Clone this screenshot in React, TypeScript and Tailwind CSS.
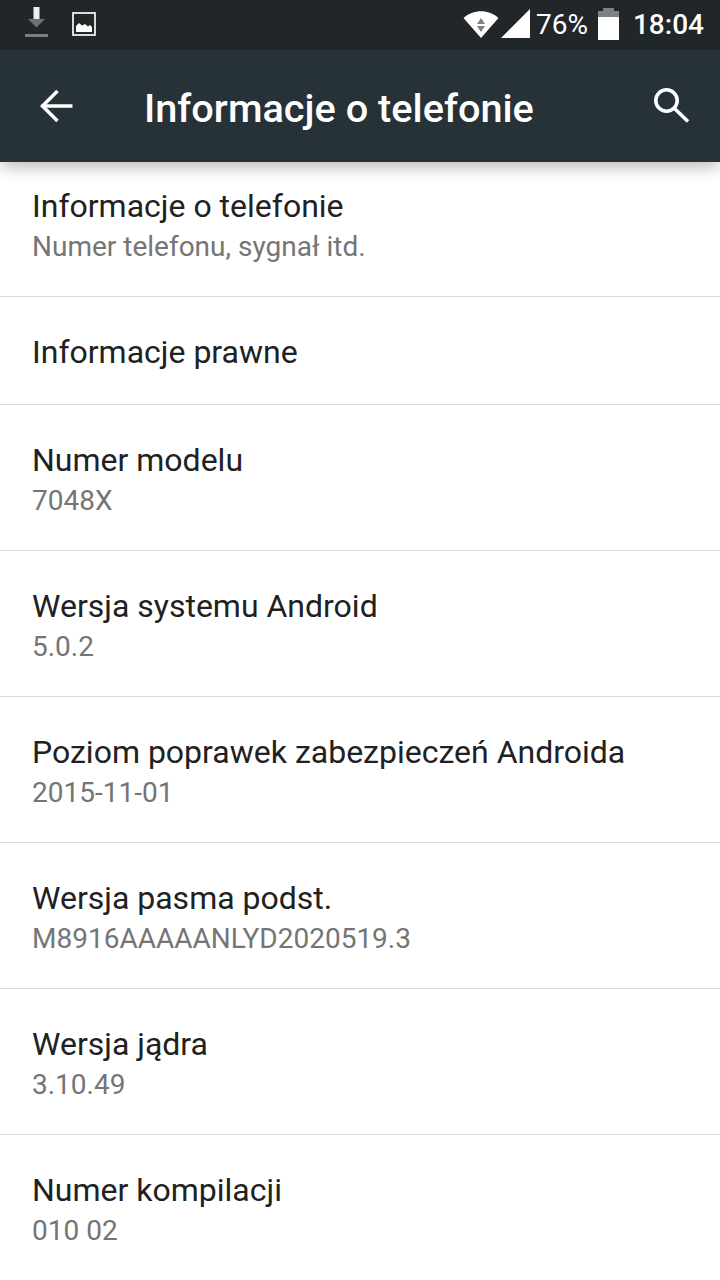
const rows = [
  { title: 'Informacje o telefonie', sub: 'Numer telefonu, sygnał itd.' },
  { title: 'Informacje prawne' },
  { title: 'Numer modelu', sub: '7048X' },
  { title: 'Wersja systemu Android', sub: '5.0.2' },
  { title: 'Poziom poprawek zabezpieczeń Androida', sub: '2015-11-01' },
  { title: 'Wersja pasma podst.', sub: 'M8916AAAAANLYD2020519.3' },
  { title: 'Wersja jądra', sub: '3.10.49' },
  { title: 'Numer kompilacji', sub: '010 02' },
]

function StatusBar() {
  return (
    <div className="flex h-[50px] shrink-0 items-center bg-[#212629] pl-[24px] pr-[16px] text-white">
      <svg width="26" height="34" viewBox="0 0 26 34" className="mb-[2px]">
        <rect x="9.5" y="0" width="6" height="13" fill="#eeeeee" />
        <path d="M4 12h17l-8.500 8.500z" fill="#6d7072" />
        <rect x="1" y="27" width="23" height="3" fill="#7b7f81" />
      </svg>
      <svg width="24" height="24" viewBox="0 0 24 24" className="ml-[22px] mb-[2px]">
        <rect x="1" y="1" width="22" height="22" fill="none" stroke="#eeeeee" strokeWidth="1.800" />
        <path d="M4 20v-6l3-3 3 2.500 3-1.500 3 2.500 2-1.500 2 2V20z" fill="#ffffff" />
      </svg>
      <div className="flex-1" />
      <svg width="36" height="30" viewBox="0 0 36 30" className="mb-[2px]">
        <path d="M0.500 9C10 0 26 0 35.500 9L18 29z" fill="#ffffff" />
        <path d="M18 9l4 6h-8z" fill="#7e8082" />
        <path d="M14 17h8l-4 6z" fill="#7e8082" />
      </svg>
      <svg width="30" height="30" viewBox="0 0 30 30" className="ml-[2px] mb-[2px]">
        <path d="M29 0v29H0z" fill="#ffffff" />
      </svg>
      <span className="ml-[5px] text-[28px] leading-none">76%</span>
      <div className="ml-[10px] mb-[2px] flex h-[32px] w-[21px] flex-col items-center">
        <div className="h-[3px] w-[11px] bg-[#7e8082]" />
        <div className="h-[6px] w-[21px] bg-[#7e8082]" />
        <div className="w-[21px] flex-1 bg-white" />
      </div>
      <span className="ml-[14px] text-[28px] font-medium leading-none">18:04</span>
    </div>
  )
}

function AppBar() {
  return (
    <div className="relative z-10 flex h-[112px] shrink-0 items-center bg-[#263238] text-white shadow-[0_8px_14px_-2px_rgba(0,0,0,0.25)]">
      <svg width="40" height="40" viewBox="0 0 40 40" className="ml-[36px]" fill="none" stroke="#ffffff" strokeWidth="3.500">
        <path d="M5.500 20H36.500" />
        <path d="M21.500 5L6.500 20L21.500 35" />
      </svg>
      <span className="ml-[68px] flex-1 pt-[6px] text-[39.700px] font-medium leading-none">
        Informacje o telefonie
      </span>
      <svg width="40" height="40" viewBox="0 0 40 40" className="mb-[2px] mr-[30px]" fill="none" stroke="#ffffff" strokeWidth="3.600">
        <circle cx="16.500" cy="15.500" r="10.700" />
        <path d="M24 23L38 36.500" />
      </svg>
    </div>
  )
}

export default function App() {
  return (
    <div className="flex h-[1280px] w-[720px] flex-col overflow-hidden bg-white font-['Roboto',sans-serif]">
      <StatusBar />
      <AppBar />
      <div className="-mt-[11px]">
        {rows.map((row) => (
          <div
            key={row.title}
            className={`flex flex-col justify-center border-b border-[#dcdcdc] pl-[32px] ${row.sub ? 'h-[146px] pt-[5px]' : 'h-[108px] pt-[2px]'}`}
          >
            <div className="text-[32px] leading-[40px] text-[#212121]">{row.title}</div>
            {row.sub && <div className="mt-[1px] text-[28px] leading-[40px] text-[#757575]">{row.sub}</div>}
          </div>
        ))}
      </div>
    </div>
  )
}
